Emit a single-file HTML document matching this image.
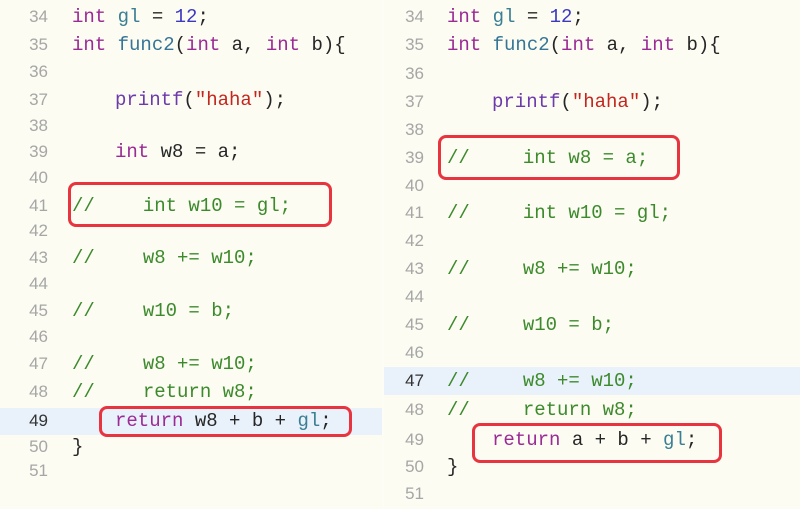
<!DOCTYPE html>
<html><head><meta charset="utf-8"><style>
body{margin:0;width:800px;height:509px;overflow:hidden;background:#fdfdf5;position:relative;font-family:"Liberation Mono",monospace;}
.p{position:absolute;top:0;height:509px;background:#fcfcf3}
.l{position:absolute;height:24px;line-height:24px;font-size:19px;white-space:pre;color:#262626}
.n{position:absolute;width:40px;text-align:right;font-family:"Liberation Sans",sans-serif;font-size:17px;height:24px;line-height:24px;color:#a6a6a6}
.hl{position:absolute;background:#e9f1fb}
.k{color:#9b2a95}.g{color:#3a7f93}.num{color:#3b38c2}.f{color:#367596}.s{color:#c4261e}.c{color:#3c8a2c}.pf{color:#6d3aab}
.box{position:absolute;border:3px solid #e8343f;border-radius:8px;box-sizing:border-box}
.sp1{display:inline-block;width:48px}.sp2{display:inline-block;width:53px}
</style></head><body>
<div class="p" style="left:0;width:382px"></div>
<div class="p" style="left:384px;width:416px"></div>
<div class="hl" style="left:0;top:408px;width:382px;height:27px"></div>
<div class="hl" style="left:384px;top:367px;width:416px;height:28px"></div>

<div class="n" style="left:8px;top:5px">34</div><div class="l" style="left:72px;top:5px"><span class="k">int</span> <span class="g">gl</span> = <span class="num">12</span>;</div>
<div class="n" style="left:8px;top:33px">35</div><div class="l" style="left:72px;top:33px"><span class="k">int</span> <span class="f">func2</span>(<span class="k">int</span> a, <span class="k">int</span> b){</div>
<div class="n" style="left:8px;top:60px">36</div>
<div class="n" style="left:8px;top:88px">37</div><div class="l" style="left:115px;top:88px"><span class="pf">printf</span>(<span class="s">"haha"</span>);</div>
<div class="n" style="left:8px;top:114px">38</div>
<div class="n" style="left:8px;top:140px">39</div><div class="l" style="left:115px;top:140px"><span class="k">int</span> w8 = a;</div>
<div class="n" style="left:8px;top:166px">40</div>
<div class="n" style="left:8px;top:194px">41</div><div class="l c" style="left:72px;top:194px">//<span class="sp1"></span>int w10 = gl;</div>
<div class="n" style="left:8px;top:219px">42</div>
<div class="n" style="left:8px;top:246px">43</div><div class="l c" style="left:72px;top:246px">//<span class="sp1"></span>w8 += w10;</div>
<div class="n" style="left:8px;top:272px">44</div>
<div class="n" style="left:8px;top:299px">45</div><div class="l c" style="left:72px;top:299px">//<span class="sp1"></span>w10 = b;</div>
<div class="n" style="left:8px;top:325px">46</div>
<div class="n" style="left:8px;top:352px">47</div><div class="l c" style="left:72px;top:352px">//<span class="sp1"></span>w8 += w10;</div>
<div class="n" style="left:8px;top:380px">48</div><div class="l c" style="left:72px;top:380px">//<span class="sp1"></span>return w8;</div>
<div class="n" style="left:8px;top:409px;color:#333">49</div><div class="l" style="left:115px;top:409px"><span class="k">return</span> w8 + b + <span class="g">gl</span>;</div>
<div class="n" style="left:8px;top:435px">50</div><div class="l" style="left:72px;top:435px">}</div>
<div class="n" style="left:8px;top:459px">51</div>

<div class="n" style="left:384px;top:5px">34</div><div class="l" style="left:447px;top:5px"><span class="k">int</span> <span class="g">gl</span> = <span class="num">12</span>;</div>
<div class="n" style="left:384px;top:33px">35</div><div class="l" style="left:447px;top:33px"><span class="k">int</span> <span class="f">func2</span>(<span class="k">int</span> a, <span class="k">int</span> b){</div>
<div class="n" style="left:384px;top:62px">36</div>
<div class="n" style="left:384px;top:90px">37</div><div class="l" style="left:492px;top:90px"><span class="pf">printf</span>(<span class="s">"haha"</span>);</div>
<div class="n" style="left:384px;top:118px">38</div>
<div class="n" style="left:384px;top:146px">39</div><div class="l c" style="left:447px;top:146px">//<span class="sp2"></span>int w8 = a;</div>
<div class="n" style="left:384px;top:174px">40</div>
<div class="n" style="left:384px;top:201px">41</div><div class="l c" style="left:447px;top:201px">//<span class="sp2"></span>int w10 = gl;</div>
<div class="n" style="left:384px;top:229px">42</div>
<div class="n" style="left:384px;top:257px">43</div><div class="l c" style="left:447px;top:257px">//<span class="sp2"></span>w8 += w10;</div>
<div class="n" style="left:384px;top:285px">44</div>
<div class="n" style="left:384px;top:313px">45</div><div class="l c" style="left:447px;top:313px">//<span class="sp2"></span>w10 = b;</div>
<div class="n" style="left:384px;top:341px">46</div>
<div class="n" style="left:384px;top:369px;color:#333">47</div><div class="l c" style="left:447px;top:369px">//<span class="sp2"></span>w8 += w10;</div>
<div class="n" style="left:384px;top:398px">48</div><div class="l c" style="left:447px;top:398px">//<span class="sp2"></span>return w8;</div>
<div class="n" style="left:384px;top:428px">49</div><div class="l" style="left:492px;top:428px"><span class="k">return</span> a + b + <span class="g">gl</span>;</div>
<div class="n" style="left:384px;top:455px">50</div><div class="l" style="left:447px;top:455px">}</div>
<div class="n" style="left:384px;top:482px">51</div>

<div class="box" style="left:68px;top:182px;width:264px;height:45px"></div>
<div class="box" style="left:99px;top:406px;width:253px;height:31px"></div>
<div class="box" style="left:438px;top:135px;width:242px;height:45px"></div>
<div class="box" style="left:472px;top:423px;width:250px;height:40px"></div>
</body></html>
